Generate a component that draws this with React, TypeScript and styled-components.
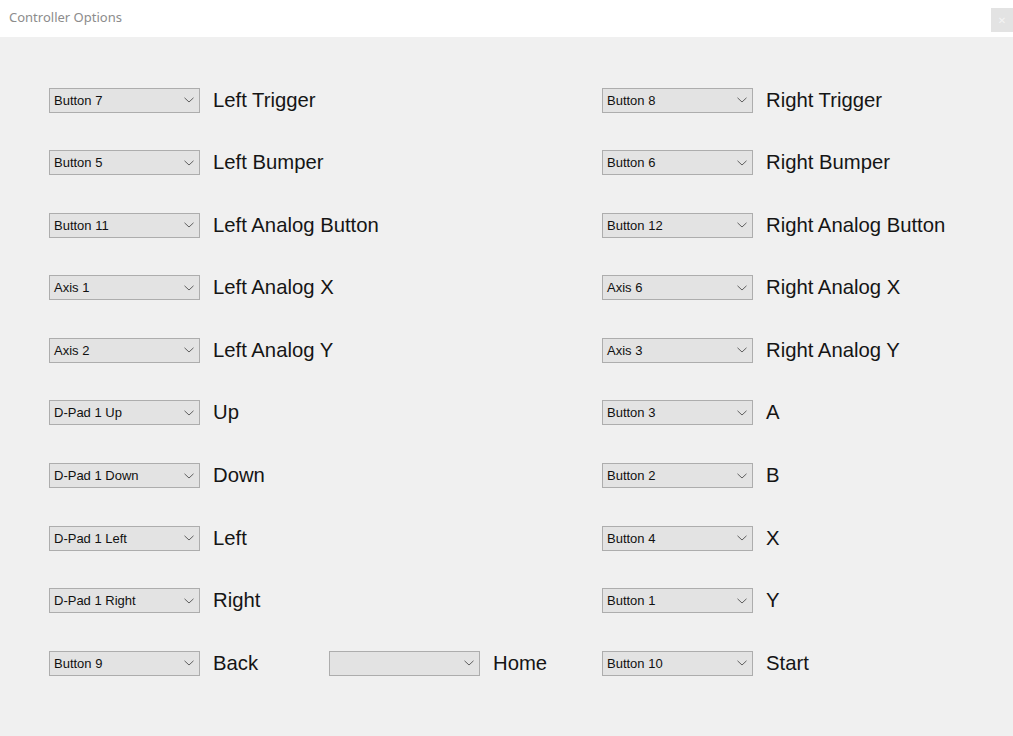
import React from 'react';
import styled, { createGlobalStyle } from 'styled-components';

const GlobalStyle = createGlobalStyle`
  html, body {
    margin: 0;
    padding: 0;
    background: #f0f0f0;
  }
  #root {
    min-height: 100vh;
  }
`;

const Window = styled.div`
  width: 1013px;
  height: 736px;
  display: flex;
  flex-direction: column;
  background: #f0f0f0;
  font-family: 'Liberation Sans', Arial, sans-serif;
`;

const TitleBar = styled.div`
  height: 37px;
  flex-shrink: 0;
  display: flex;
  justify-content: space-between;
  align-items: flex-start;
  background: #ffffff;
`;

const Title = styled.span`
  padding: 9px 0 0 9px;
  font-family: 'Noto Sans', 'Open Sans', sans-serif;
  font-size: 13px;
  color: #8c8c8c;
  line-height: 17px;
`;

const CloseButton = styled.div`
  margin-top: 8px;
  width: 22px;
  height: 24px;
  display: flex;
  align-items: center;
  justify-content: center;
  background: #e3e3e3;
  color: #f4f4f4;
  font-size: 10px;
  font-family: 'DejaVu Sans', sans-serif;
`;

const Body = styled.div`
  flex: 1;
  display: grid;
  grid-template-columns: 553px 1fr;
  grid-auto-rows: 24px;
  row-gap: 38.6px;
  padding: 51px 0 0 49px;
`;

const Row = styled.div`
  display: flex;
  align-items: center;
`;

const Field = styled.div<{ $width?: number }>`
  display: flex;
  align-items: center;
  gap: 13px;
  width: ${(p) => (p.$width ? `${p.$width}px` : 'auto')};
  flex-shrink: 0;
`;

const Combo = styled.div`
  box-sizing: border-box;
  width: 151px;
  height: 25px;
  display: flex;
  align-items: center;
  justify-content: space-between;
  padding: 0 5px 0 4px;
  background: #e3e3e3;
  border: 1px solid #adadad;
  font-family: 'Liberation Sans', Arial, sans-serif;
  font-size: 13px;
  color: #111;
`;

const Label = styled.span`
  font-size: 20.3px;
  color: #151515;
  white-space: nowrap;
`;

const Chevron = () => (
  <svg width="10" height="6" viewBox="0 0 10 6">
    <path d="M0.5 0.8 L5 5 L9.5 0.8" fill="none" stroke="#5f5f5f" strokeWidth="1" />
  </svg>
);

type Binding = { value: string; label: string };

const Select = ({ value, label, width }: Binding & { width?: number }) => (
  <Field $width={width}>
    <Combo>
      <span>{value}</span>
      <Chevron />
    </Combo>
    <Label>{label}</Label>
  </Field>
);

const left: Binding[] = [
  { value: 'Button 7', label: 'Left Trigger' },
  { value: 'Button 5', label: 'Left Bumper' },
  { value: 'Button 11', label: 'Left Analog Button' },
  { value: 'Axis 1', label: 'Left Analog X' },
  { value: 'Axis 2', label: 'Left Analog Y' },
  { value: 'D-Pad 1 Up', label: 'Up' },
  { value: 'D-Pad 1 Down', label: 'Down' },
  { value: 'D-Pad 1 Left', label: 'Left' },
  { value: 'D-Pad 1 Right', label: 'Right' },
];

const right: Binding[] = [
  { value: 'Button 8', label: 'Right Trigger' },
  { value: 'Button 6', label: 'Right Bumper' },
  { value: 'Button 12', label: 'Right Analog Button' },
  { value: 'Axis 6', label: 'Right Analog X' },
  { value: 'Axis 3', label: 'Right Analog Y' },
  { value: 'Button 3', label: 'A' },
  { value: 'Button 2', label: 'B' },
  { value: 'Button 4', label: 'X' },
  { value: 'Button 1', label: 'Y' },
];

export default function App() {
  return (
    <>
      <GlobalStyle />
      <Window>
        <TitleBar>
          <Title>Controller Options</Title>
          <CloseButton>✕</CloseButton>
        </TitleBar>
        <Body>
          {left.map((l, i) => (
            <React.Fragment key={l.label}>
              <Row>
                <Select {...l} />
              </Row>
              <Row>
                <Select {...right[i]} />
              </Row>
            </React.Fragment>
          ))}
          <Row>
            <Select value="Button 9" label="Back" width={280} />
            <Select value="" label="Home" />
          </Row>
          <Row>
            <Select value="Button 10" label="Start" />
          </Row>
        </Body>
      </Window>
    </>
  );
}
